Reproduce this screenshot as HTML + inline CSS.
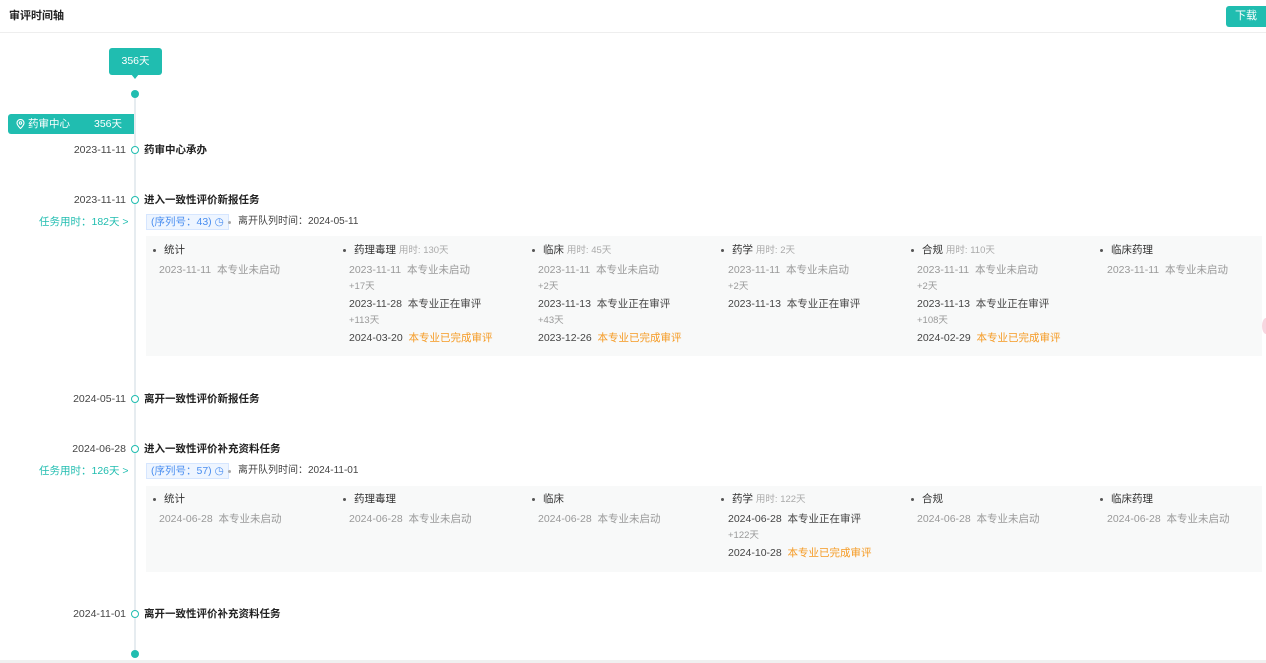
<!DOCTYPE html>
<html><head><meta charset="utf-8"><style>
*{margin:0;padding:0;box-sizing:border-box}
body{width:1266px;height:663px;background:#fff;font-family:"Liberation Sans","Noto Sans CJK SC",sans-serif;position:relative;overflow:hidden;color:#333;font-size:10.5px}
.a{position:absolute;white-space:nowrap;line-height:16px}
.g{color:#999}.d{color:#444}.o{color:#f59a23}.t{color:#20bdb0}
.b{font-weight:bold;color:#222;font-size:10.5px}
.r{width:56px;text-align:right;left:70px}
.ring{position:absolute;width:8px;height:8px;border:1.5px solid #20bdb0;border-radius:50%;background:#fff;left:131px}
.dot{position:absolute;width:8px;height:8px;background:#20bdb0;border-radius:50%;left:131px}
.panel{position:absolute;left:146px;width:1116px;background:#f8f9f9}
.bul{position:absolute;width:3px;height:3px;background:#555;border-radius:50%}
.hd{color:#333}.hd small{color:#aaa;font-size:9.5px}
</style></head><body>
<div class="a b" style="left:9px;top:8px;font-size:11px">审评时间轴</div>
<div style="position:absolute;left:1226px;top:6px;width:40px;height:21px;background:#20bdb0;border-radius:3px 0 0 3px;color:#fff;font-size:11px;line-height:21px;text-align:center">下载</div>
<div style="position:absolute;left:0;top:32px;width:1266px;height:1px;background:#eee"></div>
<div style="position:absolute;left:134px;top:94px;width:2px;height:560px;background:#e6ecf0"></div>
<div style="position:absolute;left:109px;top:48px;width:53px;height:27px;background:#20bdb0;border-radius:3px;color:#fff;font-size:10.5px;line-height:27px;text-align:center">356天</div>
<div style="position:absolute;left:131px;top:74px;border:4px solid transparent;border-top:5px solid #20bdb0"></div>
<div class="dot" style="top:90px"></div>
<div style="position:absolute;left:8px;top:114px;width:126px;height:20px;background:#20bdb0;border-radius:3px 0 0 3px;color:#fff;font-size:10.5px;line-height:20px">
<svg style="position:absolute;left:8px;top:5px" width="9" height="10" viewBox="0 0 9 10"><path d="M4.5 9.5C2 7 1 5.5 1 4a3.5 3.5 0 0 1 7 0c0 1.5-1 3-3.5 5.5z" fill="none" stroke="#fff" stroke-width="1.1"/><circle cx="4.5" cy="4" r="1.2" fill="none" stroke="#fff" stroke-width="1"/></svg>
<span style="position:absolute;left:20px">药审中心</span><span style="position:absolute;left:86px">356天</span></div>

<div class="a d r" style="top:142px">2023-11-11</div><div class="ring" style="top:146px"></div><div class="a b" style="left:144px;top:142px">药审中心承办</div>
<div class="a d r" style="top:192px">2023-11-11</div><div class="ring" style="top:196px"></div><div class="a b" style="left:144px;top:192px">进入一致性评价新报任务</div>
<div class="a t" style="left:39px;top:214px">任务用时：182天 &gt;</div>
<div class="a" style="left:146px;top:214px;height:16px;border:1px solid #d6e6ff;background:#eef5ff;color:#4a8ef0;padding:0 4px;line-height:14px">(序列号：43) ◷</div>
<div class="bul" style="left:228px;top:221px;background:#aaa"></div><div class="a d" style="left:238px;top:214px;font-size:10px">离开队列时间：2024-05-11</div>

<div class="panel" style="top:236px;height:120px"></div>
<div class="panel" style="top:486px;height:86px"></div>

<div class="a d r" style="top:391px">2024-05-11</div><div class="ring" style="top:395px"></div><div class="a b" style="left:144px;top:391px">离开一致性评价新报任务</div>
<div class="a d r" style="top:441px">2024-06-28</div><div class="ring" style="top:445px"></div><div class="a b" style="left:144px;top:441px">进入一致性评价补充资料任务</div>
<div class="a t" style="left:39px;top:463px">任务用时：126天 &gt;</div>
<div class="a" style="left:146px;top:463px;height:16px;border:1px solid #d6e6ff;background:#eef5ff;color:#4a8ef0;padding:0 4px;line-height:14px">(序列号：57) ◷</div>
<div class="bul" style="left:228px;top:470px;background:#aaa"></div><div class="a d" style="left:238px;top:463px;font-size:10px">离开队列时间：2024-11-01</div>
<div class="a d r" style="top:606px">2024-11-01</div><div class="ring" style="top:610px"></div><div class="a b" style="left:144px;top:606px">离开一致性评价补充资料任务</div>
<div class="dot" style="top:650px"></div>
<div style="position:absolute;left:0;top:660px;width:1266px;height:3px;background:#f0f0f0"></div>
<div style="position:absolute;left:1262px;top:318px;width:8px;height:16px;border-radius:50%;background:#f7d7e0"></div>

<div class="bul" style="left:153px;top:249px"></div><div class="a hd" style="left:164px;top:242px">统计</div>
<div class="a g" style="left:159px;top:262px">2023-11-11&nbsp; 本专业未启动</div>

<div class="bul" style="left:343px;top:249px"></div><div class="a hd" style="left:354px;top:242px">药理毒理 <small>用时: 130天</small></div>
<div class="a g" style="left:349px;top:262px">2023-11-11&nbsp; 本专业未启动</div>
<div class="a g" style="left:349px;top:279px;font-size:9.5px">+17天</div>
<div class="a d" style="left:349px;top:296px">2023-11-28&nbsp; 本专业正在审评</div>
<div class="a g" style="left:349px;top:313px;font-size:9.5px">+113天</div>
<div class="a d" style="left:349px;top:330px">2024-03-20&nbsp; <span class="o">本专业已完成审评</span></div>

<div class="bul" style="left:532px;top:249px"></div><div class="a hd" style="left:543px;top:242px">临床 <small>用时: 45天</small></div>
<div class="a g" style="left:538px;top:262px">2023-11-11&nbsp; 本专业未启动</div>
<div class="a g" style="left:538px;top:279px;font-size:9.5px">+2天</div>
<div class="a d" style="left:538px;top:296px">2023-11-13&nbsp; 本专业正在审评</div>
<div class="a g" style="left:538px;top:313px;font-size:9.5px">+43天</div>
<div class="a d" style="left:538px;top:330px">2023-12-26&nbsp; <span class="o">本专业已完成审评</span></div>

<div class="bul" style="left:721px;top:249px"></div><div class="a hd" style="left:732px;top:242px">药学 <small>用时: 2天</small></div>
<div class="a g" style="left:728px;top:262px">2023-11-11&nbsp; 本专业未启动</div>
<div class="a g" style="left:728px;top:279px;font-size:9.5px">+2天</div>
<div class="a d" style="left:728px;top:296px">2023-11-13&nbsp; 本专业正在审评</div>

<div class="bul" style="left:911px;top:249px"></div><div class="a hd" style="left:922px;top:242px">合规 <small>用时: 110天</small></div>
<div class="a g" style="left:917px;top:262px">2023-11-11&nbsp; 本专业未启动</div>
<div class="a g" style="left:917px;top:279px;font-size:9.5px">+2天</div>
<div class="a d" style="left:917px;top:296px">2023-11-13&nbsp; 本专业正在审评</div>
<div class="a g" style="left:917px;top:313px;font-size:9.5px">+108天</div>
<div class="a d" style="left:917px;top:330px">2024-02-29&nbsp; <span class="o">本专业已完成审评</span></div>

<div class="bul" style="left:1100px;top:249px"></div><div class="a hd" style="left:1111px;top:242px">临床药理</div>
<div class="a g" style="left:1107px;top:262px">2023-11-11&nbsp; 本专业未启动</div>

<div class="bul" style="left:153px;top:498px"></div><div class="a hd" style="left:164px;top:491px">统计</div>
<div class="a g" style="left:159px;top:511px">2024-06-28&nbsp; 本专业未启动</div>
<div class="bul" style="left:343px;top:498px"></div><div class="a hd" style="left:354px;top:491px">药理毒理</div>
<div class="a g" style="left:349px;top:511px">2024-06-28&nbsp; 本专业未启动</div>
<div class="bul" style="left:532px;top:498px"></div><div class="a hd" style="left:543px;top:491px">临床</div>
<div class="a g" style="left:538px;top:511px">2024-06-28&nbsp; 本专业未启动</div>
<div class="bul" style="left:721px;top:498px"></div><div class="a hd" style="left:732px;top:491px">药学 <small>用时: 122天</small></div>
<div class="a d" style="left:728px;top:511px">2024-06-28&nbsp; 本专业正在审评</div>
<div class="a g" style="left:728px;top:528px;font-size:9.5px">+122天</div>
<div class="a d" style="left:728px;top:545px">2024-10-28&nbsp; <span class="o">本专业已完成审评</span></div>
<div class="bul" style="left:911px;top:498px"></div><div class="a hd" style="left:922px;top:491px">合规</div>
<div class="a g" style="left:917px;top:511px">2024-06-28&nbsp; 本专业未启动</div>
<div class="bul" style="left:1100px;top:498px"></div><div class="a hd" style="left:1111px;top:491px">临床药理</div>
<div class="a g" style="left:1107px;top:511px">2024-06-28&nbsp; 本专业未启动</div>
</body></html>
